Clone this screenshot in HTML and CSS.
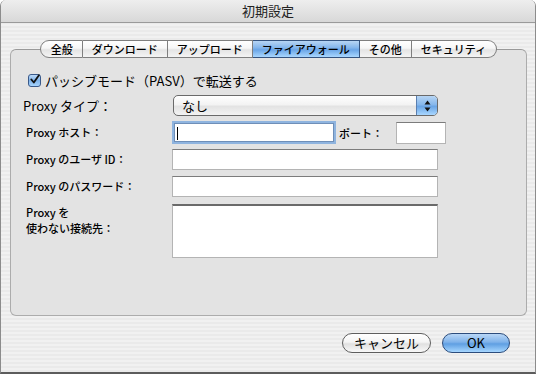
FILE: index.html
```html
<!DOCTYPE html>
<html lang="ja">
<head>
  <meta charset="UTF-8" />
  <title>初期設定</title>
  <link rel="stylesheet" href="styles.css">
</head>
<body>
  <div class="window">
    <div class="titlebar">初期設定</div>
    <div class="content">
      <div class="tabs">
        <span class="tab first">全般</span>
        <span class="tab">ダウンロード</span>
        <span class="tab">アップロード</span>
        <span class="tab selected">ファイアウォール</span>
        <span class="tab">その他</span>
        <span class="tab last">セキュリティ</span>
      </div>

      <div class="panel">
        <div class="check-row">
          <span class="checkbox">
            <svg width="11" height="11" viewBox="0 0 11 11"><path d="M1.5 5.5 L4.2 8.8 L9.8 0.8" fill="none" stroke="#111" stroke-width="2" stroke-linecap="round" stroke-linejoin="round"/></svg>
          </span>
          <span>パッシブモード（PASV）で転送する</span>
        </div>

        <div class="row type-row">
          <span class="label big">Proxy タイプ：</span>
          <div class="popup">
            <span class="popup-value">なし</span>
            <span class="popup-arrows">
              <svg width="9" height="14" viewBox="0 0 9 14"><path d="M4.5 1.5 L7.5 5.5 L1.5 5.5 Z M1.5 8.5 L7.5 8.5 L4.5 12.5 Z" fill="#111"/></svg>
            </span>
          </div>
        </div>

        <div class="row">
          <span class="label">Proxy ホスト：</span>
          <div class="field host"><span class="caret"></span></div>
          <span class="port-label">ポート：</span>
          <div class="field port"></div>
        </div>

        <div class="row">
          <span class="label">Proxy のユーザ ID：</span>
          <div class="field wide"></div>
        </div>

        <div class="row">
          <span class="label">Proxy のパスワード：</span>
          <div class="field wide"></div>
        </div>

        <div class="row area-row">
          <div class="label">
            <div class="line">Proxy を</div>
            <div class="line">使わない接続先：</div>
          </div>
          <div class="field wide area"></div>
        </div>
      </div>

      <div class="buttons">
        <button class="btn">キャンセル</button>
        <button class="btn default">OK</button>
      </div>
    </div>
  </div>
</body>
</html>
```

FILE: styles.css
```css
* {
  box-sizing: border-box;
}

body {
  margin: 0;
  width: 536px;
  height: 374px;
  font-family: "Noto Sans CJK JP", "DejaVu Sans", sans-serif;
  color: #000;
  background: #fff;
}

.window {
  width: 536px;
  height: 374px;
  border-left: 1px solid #8c8c8c;
  border-right: 1px solid #8c8c8c;
  border-bottom: 2px solid #5c5c5c;
  border-radius: 6px 6px 0 0;
  overflow: hidden;
  background: repeating-linear-gradient(#f1f1f1 0 2px, #eaeaea 2px 4px);
}

.titlebar {
  height: 23px;
  line-height: 22px;
  text-align: center;
  font-size: 13px;
  color: #222;
  background: linear-gradient(#eeeeee, #d8d8d8);
  border-bottom: 1px solid #9a9a9a;
}

.content {
  padding: 17px 8px 0 9px;
}

/* tab strip sits over the top edge of the panel */
.tabs {
  position: relative;
  z-index: 1;
  display: flex;
  justify-content: center;
  height: 18px;
}

.tab {
  height: 18px;
  line-height: 16px;
  padding: 0 9px;
  font-size: 11px;
  font-weight: 500;
  border: 1px solid #7f7f7f;
  border-left: none;
  background: linear-gradient(#ffffff 0%, #f6f6f6 45%, #e4e4e4 55%, #f4f4f4 100%);
}

.tab.first {
  border-left: 1px solid #7f7f7f;
  border-radius: 9px 0 0 9px;
  padding-left: 10px;
}

.tab.last {
  border-radius: 0 9px 9px 0;
  padding-right: 10px;
}

.tab.selected {
  border-color: #34537f;
  background: linear-gradient(#b7d5f4 0%, #86b7ec 40%, #6aa5e6 55%, #a9d7ff 100%);
}

.panel {
  height: 267px;
  margin-top: -9px;
  padding: 23px 0 0 12px;
  background: #e3e3e3;
  border: 1px solid #acacac;
  border-top-color: #999;
  border-radius: 6px;
}

.check-row {
  display: flex;
  align-items: center;
  height: 14px;
  padding-left: 5px;
  font-size: 13px;
}

.checkbox {
  display: flex;
  align-items: center;
  justify-content: center;
  width: 13px;
  height: 13px;
  margin-right: 4px;
  border: 1px solid #39598a;
  border-radius: 3px;
  background: linear-gradient(#bcd9f7 0%, #7fb3ea 50%, #a6d4fd 100%);
}

.checkbox svg {
  margin-top: -2px;
  margin-left: 1px;
}

.row {
  display: flex;
  align-items: center;
  height: 21px;
  margin-top: 6px;
}

.type-row {
  margin-top: 8px;
}

.label {
  width: 150px;
  padding-left: 3px;
  font-size: 11px;
  font-weight: 500;
  line-height: 13px;
}

.label.big {
  padding-left: 0;
  font-size: 13px;
  font-weight: normal;
}

.popup {
  display: flex;
  width: 265px;
  height: 21px;
  border: 1px solid #6a6a6a;
  border-radius: 5px;
  overflow: hidden;
  background: linear-gradient(#ffffff 0%, #f3f3f3 45%, #e3e3e3 55%, #f3f3f3 100%);
}

.popup-value {
  flex: 1;
  padding-left: 8px;
  font-size: 13px;
  line-height: 19px;
}

.popup-arrows {
  display: flex;
  align-items: center;
  justify-content: center;
  width: 21px;
  border-left: 1px solid #5a7fb0;
  background: linear-gradient(#b7d5f4 0%, #86b7ec 45%, #6aa5e6 55%, #a9d7ff 100%);
}

.field {
  height: 21px;
  background: #fff;
  border: 1px solid #b4b4b4;
  border-top-color: #7c7c7c;
}

.field.host {
  width: 160px;
  height: 19px;
  margin-left: 1px;
  padding: 3px 0 0 2px;
  border-color: #6f8fb8;
  box-shadow: 0 0 0 2px #8fb4df;
}

.caret {
  display: block;
  width: 1px;
  height: 13px;
  background: #000;
}

.port-label {
  margin-left: 5px;
  width: 57px;
  font-size: 11px;
  font-weight: 500;
}

.field.port {
  width: 50px;
  height: 22px;
}

.field.wide {
  width: 266px;
  margin-left: -1px;
}

.area-row {
  align-items: flex-start;
  height: 54px;
  margin-top: 7px;
}

.area-row .label {
  line-height: 16px;
}

.field.area {
  height: 54px;
  border-top: 2px solid #6a6a6a;
}

.buttons {
  display: flex;
  justify-content: flex-end;
  gap: 11px;
  margin-top: 17px;
  padding-right: 17px;
}

.btn {
  height: 20px;
  padding: 0;
  font-family: inherit;
  font-size: 13px;
  line-height: 18px;
  color: #000;
  border: 1px solid #5e5e5e;
  border-radius: 10px;
  background: linear-gradient(#ffffff 0%, #f4f4f4 45%, #e0e0e0 55%, #f8f8f8 100%);
  width: 89px;
}

.btn.default {
  width: 68px;
  border-color: #2c4c7c;
  background: linear-gradient(#b9d7f6 0%, #7fb2ea 45%, #5f9fe2 55%, #a6d6ff 100%);
}
```
